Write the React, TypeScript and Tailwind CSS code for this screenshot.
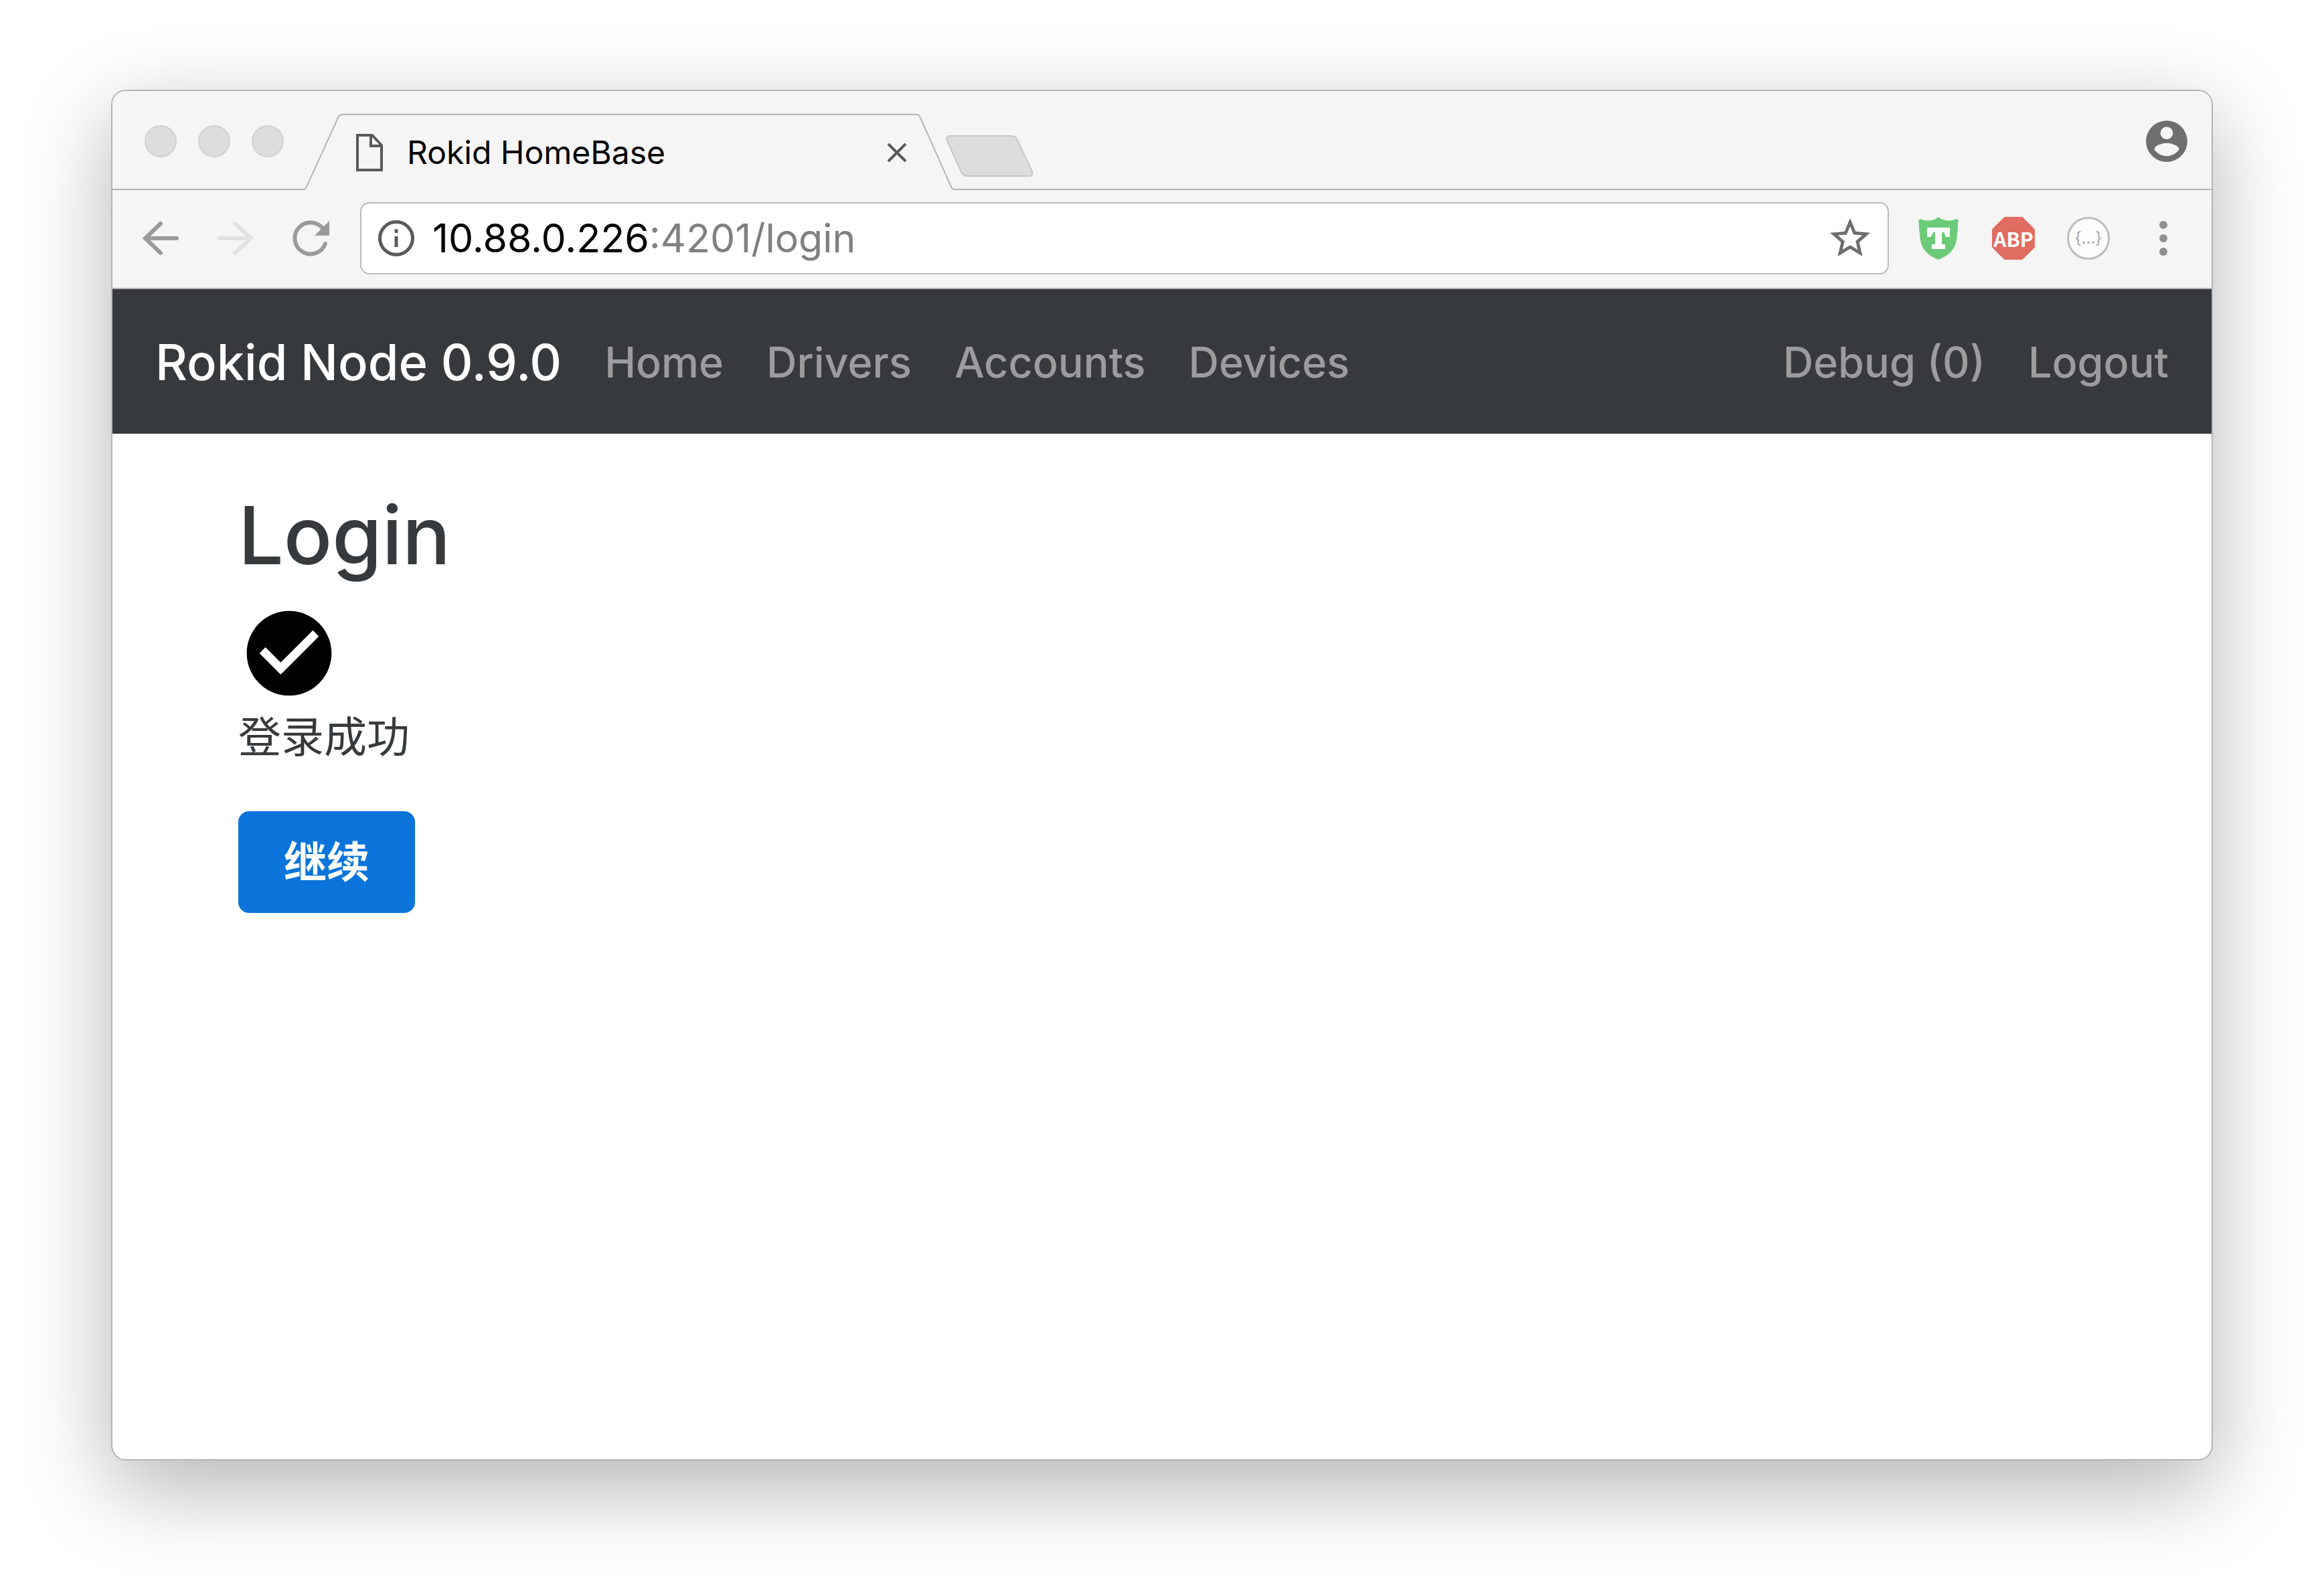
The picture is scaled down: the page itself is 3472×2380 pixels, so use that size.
import React from "react";

const navLinks = ["Home", "Drivers", "Accounts", "Devices"];
const sessionLinks = ["Debug (0)", "Logout"];

function Tab() {
  return (
    <div className="flex h-[114px] min-w-0 self-end">
      <svg className="h-[114px] w-[58px] shrink-0" viewBox="0 0 58 114" fill="none" stroke="#b4b4b4" strokeWidth="2">
        <path d="M0 113C2 113 3 112 4 109L51 6C53 2 54 1 58 1" />
      </svg>
      <div className="flex w-[856px] min-w-0 items-center gap-9 border-t-2 border-[#b4b4b4] pr-3 pl-5">
        <svg className="h-14 w-10 shrink-0" viewBox="0 0 40 56" fill="none" stroke="#5a5a5a" strokeWidth="4">
          <path d="M2 2H24L38 17V54H2Z" />
          <path d="M22 2V18H38" />
        </svg>
        <span className="min-w-0 flex-1 truncate text-[48px] leading-[64px] text-black">Rokid HomeBase</span>
        <button type="button" aria-label="Close tab" className="shrink-0">
          <svg className="h-8 w-8" viewBox="0 0 32 32" stroke="#5a5a5a" strokeWidth="4">
            <path d="M3 3L29 29M29 3L3 29" />
          </svg>
        </button>
      </div>
      <svg className="h-[114px] w-[58px] shrink-0" viewBox="0 0 58 114" fill="none" stroke="#b4b4b4" strokeWidth="2">
        <path d="M0 1C4 1 5 2 7 6L53 109C54 112 55 113 58 113" />
      </svg>
    </div>
  );
}

function TabStrip() {
  return (
    <div className="flex h-[148px]">
      <div className="flex w-[286px] shrink-0 items-center gap-8 border-b-2 border-[#b4b4b4] pt-1 pl-12">
        {["Close", "Minimize", "Zoom"].map((name) => (
          <button
            key={name}
            type="button"
            aria-label={name}
            className="size-12 rounded-full border-2 border-[#d2d2d2] bg-[#dddddd]"
          />
        ))}
      </div>
      <Tab />
      <div className="flex flex-1 items-center justify-between border-b-2 border-[#b4b4b4] pt-1 pr-[30px]">
        <button type="button" aria-label="New tab" className="-ml-[14px] mt-11">
          <svg className="h-[66px] w-[132px]" viewBox="0 0 132 66" fill="#dddddd" stroke="#c6c6c6" strokeWidth="2">
            <path d="M7 3H98C104 3 106 5 108 9L130 56C131 60 130 63 126 63H34C29 63 26 61 24 57L3 10C1 6 3 3 7 3Z" />
          </svg>
        </button>
        <button type="button" aria-label="Profile">
          <svg className="size-[74px]" viewBox="0 0 24 24" fill="#6e6e6e">
            <path d="M12 2C6.48 2 2 6.48 2 12s4.48 10 10 10 10-4.48 10-10S17.52 2 12 2zm0 3c1.66 0 3 1.34 3 3s-1.34 3-3 3-3-1.34-3-3 1.34-3 3-3zm0 14.2c-2.5 0-4.71-1.28-6-3.22.03-1.99 4-3.08 6-3.08 1.99 0 5.97 1.09 6 3.08-1.29 1.94-3.5 3.22-6 3.22z" />
          </svg>
        </button>
      </div>
    </div>
  );
}

function AddressBar() {
  return (
    <div className="flex h-[108px] min-w-0 flex-1 items-center rounded-[14px] border-2 border-[#bcbcbc] bg-white pr-5 pl-6">
      <svg className="size-[56px] shrink-0" viewBox="0 0 56 56" fill="none" stroke="#5a5a5a" strokeWidth="5">
        <circle cx="28" cy="28" r="24.5" />
        <path d="M28 25V41M28 14.5V20" />
      </svg>
      <div className="relative ml-[26px] min-w-0 flex-1 text-[59px] leading-[72px]">
        <div aria-hidden="true" className="truncate text-[#808080]">
          <span className="text-black">10.88.0.226</span>:4201/login
        </div>
        <input
          aria-label="Address"
          type="text"
          defaultValue="10.88.0.226:4201/login"
          className="absolute inset-0 w-full bg-transparent text-transparent caret-black outline-none"
        />
      </div>
      <button type="button" aria-label="Bookmark this page" className="shrink-0">
        <svg className="size-[72px]" viewBox="0 0 24 24" fill="#6e6e6e">
          <path d="M22 9.24l-7.19-.62L12 2 9.19 8.63 2 9.24l5.46 4.73L5.82 21 12 17.27 18.18 21l-1.63-7.03L22 9.24zM12 15.4l-3.76 2.27 1-4.28-3.32-2.88 4.38-.38L12 6.1l1.71 4.04 4.38.38-3.32 2.88 1 4.28L12 15.4z" />
        </svg>
      </button>
    </div>
  );
}

function Toolbar() {
  return (
    <div className="flex items-center border-b-2 border-[#b1b1b4] pt-[18px] pb-5 pl-11">
      <div className="flex w-[326px] shrink-0 items-center gap-[55px]">
        <button type="button" aria-label="Back">
          <svg className="size-[56px]" viewBox="0 0 56 56" fill="none" stroke="#9a9a9a" strokeWidth="6" strokeLinecap="round">
            <path d="M52 28H6M28 6L5 28L28 50" />
          </svg>
        </button>
        <button type="button" aria-label="Forward">
          <svg className="size-[56px]" viewBox="0 0 56 56" fill="none" stroke="#e2e2e2" strokeWidth="6" strokeLinecap="round">
            <path d="M5 28H50M28 6L52 28L28 50" />
          </svg>
        </button>
        <button type="button" aria-label="Reload">
          <svg className="size-[60px]" viewBox="0 0 60 60" fill="none" stroke="#9a9a9a" strokeWidth="6" strokeLinecap="round">
            <path d="M52 38A23.500 23.500 0 1 1 48 15" />
            <path d="M58 4V26H36Z" fill="#9a9a9a" stroke="none" />
          </svg>
        </button>
      </div>
      <AddressBar />
      <div className="flex shrink-0 items-center gap-12 pr-10 pl-[42px]">
        <button type="button" aria-label="Shield extension">
          <svg className="size-16" viewBox="0 0 64 64">
            <path d="M32 0C36 5 50 8 58 3L62 5C60 12 62 16 60 24C60 44 52 56 32 64C12 56 4 44 4 24C2 16 4 12 2 5L6 3C14 8 28 5 32 0Z" fill="#6bcb77" />
            <path d="M15 16H49V30H43L40 23H37V41H42V48H22V41H27V23H24L21 30H15Z" fill="#fff" />
          </svg>
        </button>
        <button
          type="button"
          aria-label="Ad blocker"
          className="flex size-16 items-center justify-center bg-[#e06c62] font-['Noto_Sans_CJK_SC',sans-serif] text-[30px] leading-none font-bold text-white [clip-path:polygon(29%_0,71%_0,100%_29%,100%_71%,71%_100%,29%_100%,0_71%,0_29%)]"
        >
          ABP
        </button>
        <button
          type="button"
          aria-label="JSON viewer"
          className="flex size-16 items-center justify-center rounded-full border-3 border-[#bdbdbd] bg-[#fcfcfc] text-[24px] leading-none text-[#a8a8a8]"
        >
          {"{...}"}
        </button>
        <button type="button" aria-label="Menu">
          <svg className="size-16" viewBox="0 0 64 64" fill="#8f8f8f">
            <circle cx="32" cy="12" r="6" />
            <circle cx="32" cy="32" r="6" />
            <circle cx="32" cy="52" r="6" />
          </svg>
        </button>
      </div>
    </div>
  );
}

function Navbar() {
  return (
    <nav className="flex h-[216px] items-center bg-[#373a3c] px-16 pt-0.5">
      <a href="#" className="mr-16 text-[74px] leading-[120px] font-medium text-white">
        Rokid Node 0.9.0
      </a>
      <div className="flex gap-16 text-[63px] leading-[96px] font-medium text-[#9b9c9d]">
        {navLinks.map((label) => (
          <a key={label} href="#">
            {label}
          </a>
        ))}
      </div>
      <div className="ml-auto flex gap-16 text-[63px] leading-[96px] font-medium text-[#9b9c9d]">
        {sessionLinks.map((label) => (
          <a key={label} href="#">
            {label}
          </a>
        ))}
      </div>
    </nav>
  );
}

export default function App() {
  return (
    <div className="flex min-h-screen flex-col bg-white px-[166px] pt-[134px] pb-[198px] font-['Inter','Noto_Sans_CJK_SC',sans-serif]">
      <div className="flex flex-1 flex-col overflow-hidden rounded-[22px] border-2 border-[#b4b4b4] bg-white shadow-[0_40px_132px_rgba(0,0,0,0.3)]">
        <header className="bg-[#f5f5f5]">
          <TabStrip />
          <Toolbar />
        </header>
        <Navbar />
        <main className="flex flex-col items-start px-[188px] pt-[84px] text-[#373a3c]">
          <h1 className="text-[120px] leading-[136px] font-medium">Login</h1>
          <svg className="mt-8 size-[152px]" viewBox="0 0 24 24" fill="#000">
            <path d="M12 2C6.48 2 2 6.48 2 12s4.48 10 10 10 10-4.48 10-10S17.520 2 12 2zm-2 15l-5-5 1.410-1.410L10 14.170l7.590-7.590L19 8l-9 9z" />
          </svg>
          <p className="text-[64px] leading-[98px]">登录成功</p>
          <button
            type="button"
            className="mt-[62px] rounded-[16px] border-4 border-[#0a74da] bg-[#0a74da] px-16 py-8 text-[64px] leading-[80px] font-bold text-white"
          >
            继续
          </button>
        </main>
      </div>
    </div>
  );
}
